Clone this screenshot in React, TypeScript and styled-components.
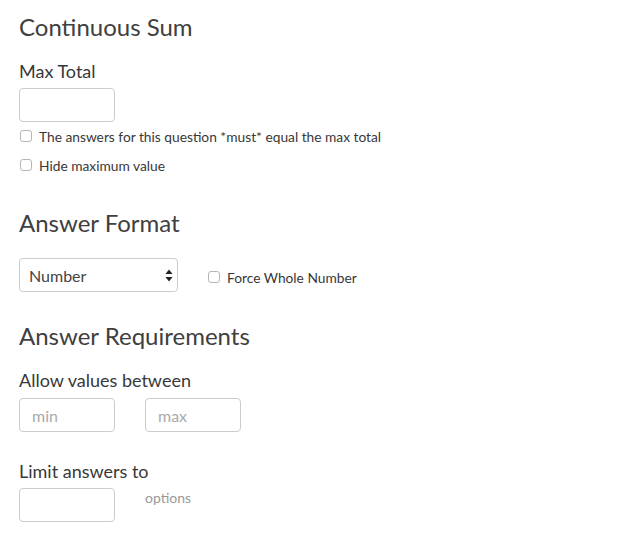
import React from "react";
import styled, { createGlobalStyle } from "styled-components";

const Global = createGlobalStyle`
  html, body { margin: 0; padding: 0; background: #fff; }
  body { font-family: Lato, "Open Sans", sans-serif; color: #333; }
  * { box-sizing: border-box; }
`;

const Page = styled.div`
  padding: 15px 19px;
  display: flex;
  flex-direction: column;
  align-items: flex-start;
`;

const Heading = styled.h2<{ $top?: number }>`
  margin: ${(p) => p.$top ?? 0}px 0 0;
  font-size: 24px;
  line-height: 24px;
  padding-bottom: 2px;
  font-weight: 400;
  color: #404040;
`;

const Label = styled.div<{ $top: number }>`
  margin-top: ${(p) => p.$top}px;
  font-size: 18px;
  line-height: 19px;
  padding-bottom: 1px;
  color: #383838;
`;

const TextInput = styled.input<{ $top?: number }>`
  margin-top: ${(p) => p.$top ?? 0}px;
  width: 96px;
  height: 34px;
  border: 1px solid #ccc;
  border-radius: 4px;
  padding: 0 12px;
  font-family: Lato, sans-serif;
  font-size: 16px;
  color: #333;
  outline: none;
  &::placeholder { color: #aaa; }
`;

const Row = styled.div<{ $top: number; $gap: number; $align?: string }>`
  margin-top: ${(p) => p.$top}px;
  display: flex;
  align-items: ${(p) => p.$align ?? "center"};
  gap: ${(p) => p.$gap}px;
`;

const CheckRow = styled.label<{ $top: number }>`
  margin-top: ${(p) => p.$top}px;
  display: flex;
  align-items: center;
  gap: 7px;
  height: 20px;
  font-size: 13.75px;
  color: #383838;
  padding-left: 1px;
`;

const Box = styled.input`
  appearance: none;
  margin: 0;
  width: 12px;
  height: 12px;
  border: 1px solid #b5b5b5;
  border-radius: 3px;
  background: #fff;
`;

const SelectBox = styled.div`
  width: 159px;
  height: 34px;
  border: 1px solid #ccc;
  border-radius: 4px;
  display: flex;
  align-items: center;
  justify-content: space-between;
  padding: 0 4px 0 9px;
  font-size: 16px;
  color: #444;
`;

const Hint = styled.span`
  font-size: 14px;
  color: #999;
  padding-top: 1px;
`;

function Check({ top, children }: { top: number; children: React.ReactNode }) {
  return (
    <CheckRow $top={top}>
      <Box type="checkbox" />
      {children}
    </CheckRow>
  );
}

export default function App() {
  return (
    <>
      <Global />
      <Page>
        <Heading>Continuous Sum</Heading>
        <Label $top={21}>Max Total</Label>
        <TextInput $top={6} />
        <Check top={4}>The answers for this question *must* equal the max total</Check>
        <Check top={9}>Hide maximum value</Check>

        <Heading $top={36}>Answer Format</Heading>
        <Row $top={21} $gap={29}>
          <SelectBox>
            <span>Number</span>
            <svg width="8" height="13" viewBox="0 0 8 13">
              <path d="M4 0.5 L7.5 5 H0.5 Z" fill="#222" />
              <path d="M4 12.5 L7.5 8 H0.5 Z" fill="#222" />
            </svg>
          </SelectBox>
          <CheckRow $top={4}>
            <Box type="checkbox" />
            Force Whole Number
          </CheckRow>
        </Row>

        <Heading $top={32}>Answer Requirements</Heading>
        <Label $top={21}>Allow values between</Label>
        <Row $top={7} $gap={30}>
          <TextInput placeholder="min" />
          <TextInput placeholder="max" />
        </Row>

        <Label $top={30}>Limit answers to</Label>
        <Row $top={6} $gap={30} $align="flex-start">
          <TextInput />
          <Hint>options</Hint>
        </Row>
      </Page>
    </>
  );
}
